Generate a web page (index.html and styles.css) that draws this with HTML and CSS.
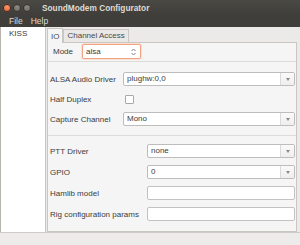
FILE: index.html
```html
<!DOCTYPE html>
<html lang="en">
<head>
  <meta charset="UTF-8" />
  <title>SoundModem Configurator</title>
  <link rel="stylesheet" href="styles.css">
</head>
<body>
  <div class="window">
    <div class="titlebar">
      <span class="btn close"></span>
      <span class="btn"></span>
      <span class="btn"></span>
      <span class="title">SoundModem Configurator</span>
    </div>
    <div class="menubar">
      <span>File</span>
      <span>Help</span>
    </div>

    <div class="body">
      <div class="sidebar">
        <div class="entry-item">KISS</div>
      </div>

      <div class="main">
        <div class="tabs">
          <div class="tab active">IO</div>
          <div class="tab">Channel Access</div>
        </div>
        <div class="pane">
          <div class="mode-row">
            <span class="mode-label">Mode</span>
            <div class="spin focus">
              <span>alsa</span>
              <svg width="5" height="8" viewBox="0 0 5 8"><path d="M0.5 3 L2.5 1 L4.5 3 M0.5 5 L2.5 7 L4.5 5" fill="none" stroke="#777" stroke-width="0.9"/></svg>
            </div>
          </div>

          <div class="section audio">
            <span>ALSA Audio Driver</span>
            <div class="combo"><span class="val">plughw:0,0</span><span class="arrow"></span></div>
            <span>Half Duplex</span>
            <div><span class="check"></span></div>
            <span>Capture Channel</span>
            <div class="combo"><span class="val">Mono</span><span class="arrow"></span></div>
          </div>

          <div class="section ptt">
            <span>PTT Driver</span>
            <div class="combo"><span class="val">none</span><span class="arrow"></span></div>
            <span>GPIO</span>
            <div class="combo"><span class="val">0</span><span class="arrow"></span></div>
            <span>Hamlib model</span>
            <div class="field"></div>
            <span>Rig configuration params</span>
            <div class="field"></div>
          </div>
        </div>
      </div>
    </div>

    <div class="statusbar"></div>
  </div>
</body>
</html>
```

FILE: styles.css
```css
body {
  margin: 0;
  font-family: 'Liberation Sans', sans-serif;
  font-size: 8px;
  color: #3c3c3c;
}
.window {
  width: 300px;
  height: 245px;
  display: flex;
  flex-direction: column;
  background: #ebeae8;
  overflow: hidden;
}

/* title + menu (dark) */
.titlebar {
  height: 15px;
  background: linear-gradient(#4a4944, #3f3e3a);
  display: flex;
  align-items: center;
  padding-left: 3px;
}
.btn {
  width: 8px;
  height: 8px;
  border-radius: 50%;
  margin-right: 2px;
  background: radial-gradient(circle at 50% 35%, #8d8a83, #5e5c56);
  box-shadow: inset 0 0 0 1px #33322e;
}
.btn.close {
  background: radial-gradient(circle at 50% 35%, #f89a6c, #df4b21);
}
.title {
  margin-left: 9px;
  color: #dfdbd2;
  font-weight: bold;
  font-size: 8.3px;
}
.menubar {
  height: 12px;
  background: #3f3e3a;
  color: #dfdbd2;
  display: flex;
  align-items: center;
  padding-left: 9px;
  font-size: 8.5px;
}
.menubar span {
  margin-right: 8px;
}

/* body */
.body {
  flex: 1;
  display: flex;
  border-left: 1px solid #b7b4ae;
}
.sidebar {
  width: 44px;
  background: #fff;
  border-right: 1px solid #c9c6c1;
}
.entry-item {
  padding: 2px 8px;
}
.main {
  flex: 1;
  display: flex;
  flex-direction: column;
  padding: 1px 3px 0 1px;
}
.tabs {
  display: flex;
  align-items: flex-end;
  height: 14px;
}
.tab {
  height: 12px;
  line-height: 12px;
  padding: 0 3px;
  border: 1px solid #cac7c2;
  border-bottom: none;
  background: #e9e8e6;
  color: #4a4a4a;
}
.tab.active {
  height: 14px;
  line-height: 15px;
  background: #f5f5f5;
  position: relative;
  margin-bottom: -1px;
  z-index: 1;
}
.pane {
  flex: 1;
  border: 1px solid #cac7c2;
  background: #f5f5f5;
}

.mode-row {
  display: flex;
  align-items: center;
  padding: 1px 0 2px 5px;
  border-bottom: 1px solid #dcdcdb;
}
.mode-label {
  width: 29px;
}
.spin {
  width: 50px;
  height: 13px;
  border: 1px solid #b9b9b9;
  border-radius: 2px;
  background: #fff;
  display: flex;
  align-items: center;
  justify-content: space-between;
  padding: 0 4px 0 3px;
}
.spin.focus {
  border-color: #f0a283;
  box-shadow: 0 0 0 1px #fbe0d4;
}

.section {
  display: grid;
  grid-auto-rows: 14px;
  align-items: center;
  padding: 10px 1px 0 2px;
}
.audio {
  grid-template-columns: 73px 1fr;
  row-gap: 6px;
  padding-bottom: 9px;
  border-bottom: 1px solid #dcdcdb;
}
.ptt {
  grid-template-columns: 97px 1fr;
  row-gap: 7px;
  padding-top: 8px;
}

.combo {
  height: 14px;
  box-sizing: border-box;
  border: 1px solid #bdbdbd;
  border-radius: 2px;
  background: #fff;
  display: flex;
}
.combo .val {
  flex: 1;
  line-height: 12px;
  padding-left: 3px;
}
.combo .arrow {
  width: 13px;
  border-left: 1px solid #dadada;
  background: linear-gradient(#fafafa, #eeeeee);
  display: flex;
  align-items: center;
  justify-content: center;
}
.combo .arrow::after {
  content: '';
  border-left: 2.5px solid transparent;
  border-right: 2.5px solid transparent;
  border-top: 3px solid #8a8a8a;
}
.check {
  display: block;
  width: 7px;
  height: 7px;
  margin-left: 2px;
  border: 1px solid #a9a9a9;
  border-radius: 1px;
  background: #fff;
}
.field {
  height: 14px;
  box-sizing: border-box;
  border: 1px solid #c2c2c2;
  border-radius: 2px;
  background: #fff;
}

.statusbar {
  height: 12px;
  background: #edecea;
  border-top: 1px solid #cfccc7;
}
```
